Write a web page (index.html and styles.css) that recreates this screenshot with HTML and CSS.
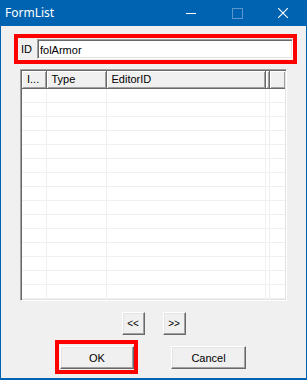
FILE: index.html
```html
<!DOCTYPE html>
<html lang="en">
<head>
    <meta charset="UTF-8">
    <title>FormList</title>
    <link rel="stylesheet" href="styles.css">
</head>
<body>
    <div class="window">
        <div class="titlebar">
            <span class="title">FormList</span>
            <div class="caption-buttons">
                <span class="caption-btn">
                    <svg width="10" height="10" viewBox="0 0 10 10"><path d="M0 5.5H10" stroke="#fff" stroke-width="1"/></svg>
                </span>
                <span class="caption-btn disabled">
                    <svg width="11" height="11" viewBox="0 0 11 11"><rect x="0.5" y="0.5" width="10" height="10" fill="none" stroke="#5a96cc" stroke-width="1"/></svg>
                </span>
                <span class="caption-btn">
                    <svg width="10" height="10" viewBox="0 0 10 10"><path d="M0 0L10 10M10 0L0 10" stroke="#fff" stroke-width="1.1"/></svg>
                </span>
            </div>
        </div>

        <div class="content">
            <div class="highlight id-row">
                <label for="formId">ID</label>
                <input type="text" id="formId" value="folArmor">
            </div>

            <div class="list">
                <table class="grid">
                    <colgroup>
                        <col class="col-index">
                        <col class="col-type">
                        <col class="col-editor">
                        <col class="col-narrow">
                        <col>
                    </colgroup>
                    <thead>
                        <tr>
                            <th>I...</th>
                            <th>Type</th>
                            <th>EditorID</th>
                            <th></th>
                            <th></th>
                        </tr>
                    </thead>
                    <tbody>
                        <tr><td></td><td></td><td></td><td></td><td></td></tr>
                        <tr><td></td><td></td><td></td><td></td><td></td></tr>
                        <tr><td></td><td></td><td></td><td></td><td></td></tr>
                        <tr><td></td><td></td><td></td><td></td><td></td></tr>
                        <tr><td></td><td></td><td></td><td></td><td></td></tr>
                        <tr><td></td><td></td><td></td><td></td><td></td></tr>
                        <tr><td></td><td></td><td></td><td></td><td></td></tr>
                        <tr><td></td><td></td><td></td><td></td><td></td></tr>
                        <tr><td></td><td></td><td></td><td></td><td></td></tr>
                        <tr><td></td><td></td><td></td><td></td><td></td></tr>
                        <tr><td></td><td></td><td></td><td></td><td></td></tr>
                        <tr><td></td><td></td><td></td><td></td><td></td></tr>
                        <tr><td></td><td></td><td></td><td></td><td></td></tr>
                        <tr><td></td><td></td><td></td><td></td><td></td></tr>
                        <tr><td></td><td></td><td></td><td></td><td></td></tr>
                        <tr><td></td><td></td><td></td><td></td><td></td></tr>
                    </tbody>
                </table>
            </div>

            <div class="nav-row">
                <button class="btn nav">&lt;&lt;</button>
                <button class="btn nav">&gt;&gt;</button>
            </div>

            <div class="action-row">
                <div class="highlight ok-wrap">
                    <button class="btn action">OK</button>
                </div>
                <button class="btn action cancel">Cancel</button>
            </div>
        </div>
    </div>
</body>
</html>
```

FILE: styles.css
```css
* {
    box-sizing: border-box;
}

body {
    margin: 0;
    font-family: 'Liberation Sans', Arial, sans-serif;
    font-size: 11px;
    color: #000;
}

.window {
    width: 307px;
    height: 380px;
    display: flex;
    flex-direction: column;
    background-color: #f0f0f0;
    border: 1px solid #0063b1;
    border-top: none;
    border-bottom-width: 2px;
}

.titlebar {
    height: 26px;
    flex-shrink: 0;
    display: flex;
    align-items: center;
    background-color: #0063b1;
    color: #fff;
    padding-left: 4px;
}

.title {
    flex: 1;
    font-family: 'Noto Sans', sans-serif;
    font-size: 12px;
    margin-top: -1px;
}

.caption-buttons {
    display: flex;
    height: 100%;
}

.caption-btn {
    width: 46px;
    display: flex;
    align-items: center;
    justify-content: center;
}

.caption-btn svg {
    display: block;
}

.content {
    flex: 1;
    display: flex;
    flex-direction: column;
    padding: 8px 0 0 13px;
}

.highlight {
    border: 4px solid #ff0000;
}

.id-row {
    width: 283px;
    height: 30px;
    display: flex;
    align-items: center;
    padding: 0 0 0 3px;
}

.id-row label {
    width: 16px;
}

.id-row input {
    flex: 1;
    height: 20px;
    margin: 0;
    padding: 1px 2px 0;
    font-family: 'Liberation Sans', Arial, sans-serif;
    font-size: 11px;
    background-color: #fff;
    border: 1px solid;
    border-color: #a0a0a0 #fff #fff #a0a0a0;
    box-shadow: inset 1px 1px #696969, inset -1px -1px #e3e3e3;
    outline: none;
}

.list {
    width: 267px;
    height: 232px;
    margin: 5px 0 0 6px;
    background-color: #fff;
    border: 1px solid;
    border-color: #a0a0a0 #fff #fff #a0a0a0;
    box-shadow: inset 1px 1px #696969, inset -1px -1px #e3e3e3;
    padding: 1px;
    overflow: hidden;
}

.grid {
    width: 100%;
    table-layout: fixed;
    border-collapse: collapse;
}

.col-index {
    width: 24px;
}

.col-type {
    width: 60px;
}

.col-editor {
    width: 159px;
}

.col-narrow {
    width: 4px;
}

.grid th {
    height: 17px;
    padding: 0 0 0 5px;
    text-align: left;
    font-weight: normal;
    white-space: nowrap;
    overflow: hidden;
    background-color: #f0f0f0;
    border-right: 1px solid #696969;
    border-bottom: 1px solid #696969;
    box-shadow: inset 1px 1px #fff, inset -1px -1px #a0a0a0;
}

.grid th:last-child {
    border-right: none;
}

.grid td {
    height: 14px;
    padding: 0;
    border-right: 1px solid #f0f0f0;
    border-bottom: 1px solid #f0f0f0;
}

.grid td:last-child {
    border-right: none;
}

.btn {
    margin: 0;
    padding: 0;
    font-family: 'Liberation Sans', Arial, sans-serif;
    font-size: 11px;
    color: #000;
    background-color: #f0f0f0;
    border: 1px solid;
    border-color: #fff #696969 #696969 #fff;
    box-shadow: inset -1px -1px #a0a0a0, inset 1px 1px #e3e3e3;
}

.nav-row {
    display: flex;
    justify-content: center;
    gap: 18px;
    margin: 11px 0 0 -13px;
}

.nav {
    width: 23px;
    height: 23px;
    font-size: 10px;
}

.action-row {
    display: flex;
    align-items: flex-start;
    gap: 33px;
    margin: 5px 0 0 41px;
}

.ok-wrap {
    padding: 2px 0 1px 1px;
}

.action {
    width: 74px;
    height: 23px;
}

.cancel {
    width: 75px;
    margin-top: 6px;
}
```
